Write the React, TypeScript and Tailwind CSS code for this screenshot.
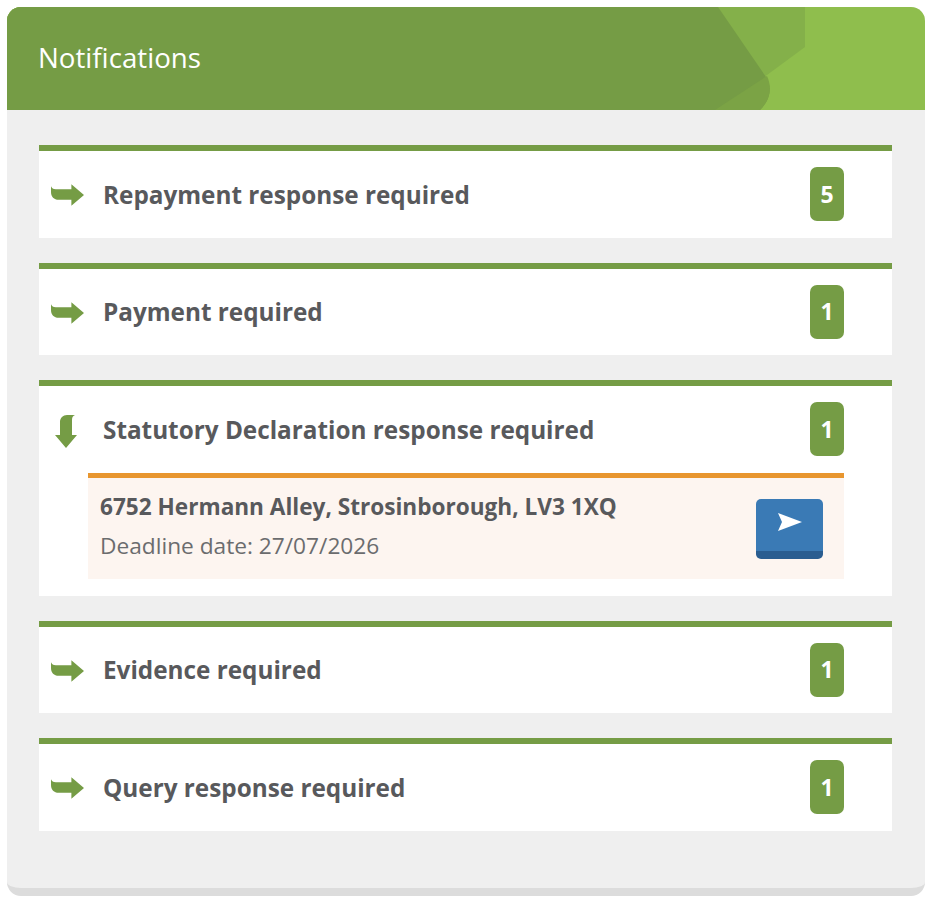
const rows = [
  { title: "Repayment response required", count: 5 },
  { title: "Payment required", count: 1 },
  { title: "Statutory Declaration response required", count: 1, open: true },
  { title: "Evidence required", count: 1 },
  { title: "Query response required", count: 1 },
];

function ArrowRight() {
  return (
    <svg width="33" height="22" viewBox="0 0 34 22" className="shrink-0" fill="#759c45">
      <path d="M0 2 C1 4 2 5 5 5 L21 5 L21 0 L34 11 L21 22 L21 16 L8 16 C3 16 0 13 0 8 Z" />
    </svg>
  );
}

function ArrowDown() {
  return (
    <svg width="22" height="33" viewBox="0 0 22 33" className="shrink-0" fill="#759c45">
      <path d="M20 0 C18 1 17 2 17 5 L17 20 L22 20 L11 33 L0 20 L5 20 L5 7 C5 3 8 0 12 0 Z" />
    </svg>
  );
}

function Badge({ count }: { count: number }) {
  return (
    <div className="flex h-[54px] w-[34px] items-center justify-center rounded-[7px] bg-[#759c45] text-[23px] font-bold text-white">
      {count}
    </div>
  );
}

function Row({ title, count, open }: { title: string; count: number; open?: boolean }) {
  return (
    <div className="border-t-[6px] border-[#759c45] bg-white">
      <div className="flex h-[86.5px] items-start pr-[48px]">
        <div className="flex w-[65px] shrink-0 justify-center">
          {open ? (
            <div className="ml-[-11px] mt-[29px]"><ArrowDown /></div>
          ) : (
            <div className="ml-[-8px] mt-[33px]"><ArrowRight /></div>
          )}
        </div>
        <p className="ml-[-1px] mt-[26.5px] text-[24.3px] font-bold leading-[34px] text-[#58595c]">{title}</p>
        <div className="ml-auto mt-[16px]">
          <Badge count={count} />
        </div>
      </div>
      {open && (
        <div className="pb-[17px] pl-[49px] pr-[48px]">
          <div className="flex h-[106px] items-start justify-between border-t-[5px] border-[#e8962f] bg-[#fdf5f0] pl-[12px] pr-[21px]">
            <div>
              <p className="mt-[12px] text-[22.6px] font-bold leading-[34px] text-[#58595c]">
                6752 Hermann Alley, Strosinborough, LV3 1XQ
              </p>
              <p className="mt-[5px] text-[22.7px] leading-[34px] text-[#6b6c6e]">Deadline date: 27/07/2026</p>
            </div>
            <button className="mt-[21px] flex h-[60px] w-[67px] items-center justify-center rounded-[5px] border-b-[8px] border-[#2a5d90] bg-[#3a7ab5] pb-[5px]">
              <svg width="25" height="18" viewBox="0 0 25 18" fill="#fff">
                <path d="M1 0 L25 9 L1 18 L5 9 Z" />
              </svg>
            </button>
          </div>
        </div>
      )}
    </div>
  );
}

export default function App() {
  return (
    <div className="min-h-[899px] bg-white pl-[7px] pr-[4px] pt-[7px] font-['Open_Sans',sans-serif]">
      <div className="h-[889px] rounded-[14px] border-b-[8px] border-[#dcdcdc] bg-[#efefef]">
        <div className="relative flex h-[103px] items-center overflow-hidden rounded-t-[14px] bg-[#8fbe4d] pl-[32px]">
          <svg className="absolute left-0 top-0 h-[103px] w-[918px]" viewBox="0 0 918 103">
            <path d="M711 0 L798 0 L798 40 L760 68 L700 103 L0 103 L0 0 Z" fill="#84b04a" />
            <path d="M0 0 L711 0 L759 70 C765 80 764 92 753 103 L0 103 Z" fill="#759c45" />
            <path d="M760 69 C765 80 764 92 753 103 L708 103 Z" fill="#7ba345" />
          </svg>
          <h1 className="relative ml-[-1px] mt-[-2px] text-[27.7px] font-normal text-white">Notifications</h1>
        </div>
        <div className="flex flex-col gap-[25px] pl-[32px] pr-[33px] pt-[35px]">
          {rows.map((row) => (
            <Row key={row.title} {...row} />
          ))}
        </div>
      </div>
    </div>
  );
}
